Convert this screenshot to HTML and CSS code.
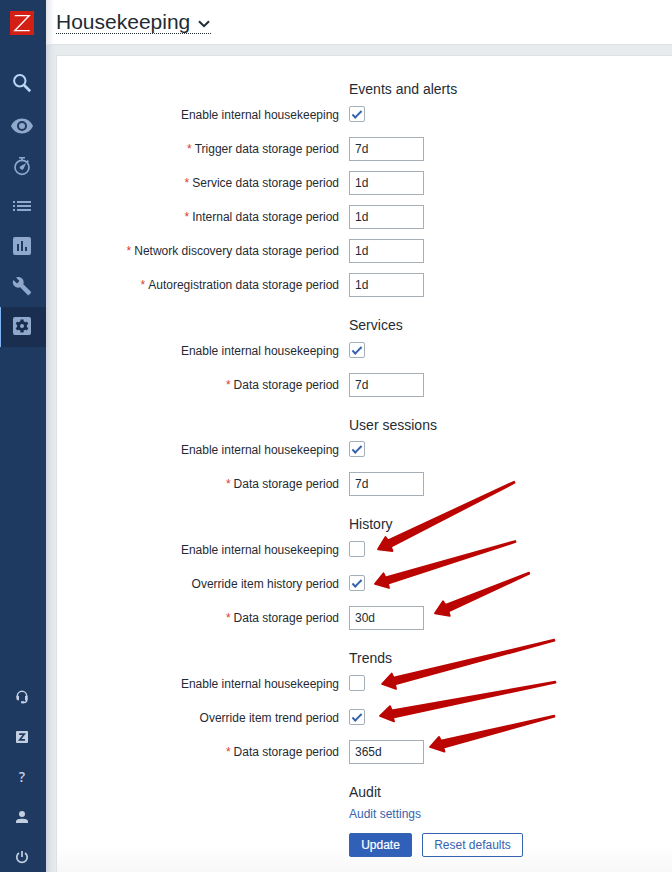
FILE: index.html
```html
<!DOCTYPE html>
<html lang="en">
<head>
<meta charset="utf-8">
<title>Housekeeping</title>
<link rel="stylesheet" href="styles.css">
</head>
<body>
<div class="app">
  <aside class="sidebar">
    <a class="logo"><svg width="24" height="24" viewBox="0 0 24 24"><path fill="#d31f14" d="M0 0h24v24H0z"/><path d="M4.700 4.500h14.600L4.700 19.700h15" fill="none" stroke="#fff" stroke-width="1.250"/></svg></a>
    <nav class="menu">
      <a class="search"><svg width="20" height="20" viewBox="0 0 20 20"><circle cx="7.800" cy="7.800" r="5.700" fill="none" stroke="currentColor" stroke-width="2"/><path d="M12 12l6.200 6.200" stroke="currentColor" stroke-width="2.700"/></svg></a>
      <a><svg width="22" height="16" viewBox="0 0 22 16"><path fill="currentColor" fill-rule="evenodd" d="M11 .5C6 .5 1.800 3.600 0 8c1.800 4.400 6 7.500 11 7.500S20.200 12.400 22 8C20.200 3.600 16 .5 11 .5zM11 13a5 5 0 1 1 0-10 5 5 0 0 1 0 10zm0-2a3 3 0 1 0 0-6 3 3 0 0 0 0 6z"/></svg></a>
      <a><svg width="18" height="20" viewBox="0 0 18 20"><circle cx="9" cy="11.300" r="7" fill="none" stroke="currentColor" stroke-width="1.700"/><path d="M6 1.700h6M9 2v2M14 4.500l1.500 1.500" stroke="currentColor" stroke-width="1.600"/><path fill="currentColor" d="M13 7.300l-2.300 5.200a2 2 0 1 1-2.900-2.600z"/></svg></a>
      <a><svg width="18" height="12" viewBox="0 0 18 12"><path fill="currentColor" d="M0 1h2v2H0zM4 1h14v2H4zM0 5h2v2H0zM4 5h14v2H4zM0 9h2v2H0zM4 9h14v2H4z"/></svg></a>
      <a><svg width="18" height="18" viewBox="0 0 18 18"><rect width="18" height="18" rx="2" fill="currentColor"/><path fill="#1f3a61" d="M4 7h2v7H4zM8 4h2v10H8zM12 10h2v4h-2z"/></svg></a>
      <a><svg width="20" height="20" viewBox="0 0 24 24"><path fill="currentColor" d="M22.700 19l-9.100-9.100c.9-2.300.4-5-1.500-6.900-2-2-5-2.400-7.400-1.300L9 6 6 9 1.600 4.700C.4 7.100.9 10.100 2.900 12.100c1.900 1.900 4.600 2.400 6.900 1.500l9.100 9.100c.4.4 1 .4 1.400 0l2.300-2.300c.5-.4.5-1.100.1-1.400z"/></svg></a>
      <a class="active"><svg width="18" height="18" viewBox="0 0 18 18"><rect width="18" height="18" rx="2" fill="currentColor"/><g fill="#1a2f50"><circle cx="9" cy="9" r="5"/><path d="M7.400 2.500h3.200v13H7.400zM2.600 7.050l1.500-2.600 11.300 6.500-1.500 2.600zM4.100 13.550l-1.500-2.600 11.300-6.500 1.500 2.600z"/></g><circle cx="9" cy="9" r="2" fill="currentColor"/></svg></a>
    </nav>
    <nav class="menu bottom">
      <a><svg width="14" height="14" viewBox="0 0 14 14"><path d="M2.300 8V6a4.700 4.700 0 0 1 9.400 0v4c0 1.700-1 2.400-2.500 2.400H7" fill="none" stroke="currentColor" stroke-width="1.500"/><path fill="currentColor" d="M1.500 6H4v4.300H3A1.500 1.500 0 0 1 1.500 9zM10 6h2.500v4.300H10zM6 11.300h3v2H6z"/></svg></a>
      <a><svg width="12" height="12" viewBox="0 0 12 12"><rect width="12" height="12" rx="1" fill="currentColor"/><path d="M3.200 3.200h5L3.700 8.900H9" fill="none" stroke="#1f3a61" stroke-width="1.700"/></svg></a>
      <a class="help">?</a>
      <a><svg width="12" height="12" viewBox="0 0 12 12"><circle cx="6" cy="3" r="3" fill="currentColor"/><path fill="currentColor" d="M0 12v-1.500C0 8.500 3 7.800 6 7.800s6 .7 6 2.700V12z"/></svg></a>
      <a><svg width="14" height="14" viewBox="0 0 14 14"><path d="M4 3a5.200 5.200 0 1 0 6 0M7 1v6" fill="none" stroke="currentColor" stroke-width="1.700"/></svg></a>
    </nav>
  </aside>
  <main class="main">
    <header class="header"><h1 class="title">Housekeeping<svg class="chevron" width="12" height="8" viewBox="0 0 12 8"><path d="M1 1.200l5 5 5-5" fill="none" stroke="#1f2c33" stroke-width="2"/></svg></h1></header>
    <form class="card">
      <section class="section">
        <h2>Events and alerts</h2>
        <div class="row"><label>Enable internal housekeeping</label><span class="check on"></span></div>
        <div class="row"><label class="req">Trigger data storage period</label><input value="7d"></div>
        <div class="row"><label class="req">Service data storage period</label><input value="1d"></div>
        <div class="row"><label class="req">Internal data storage period</label><input value="1d"></div>
        <div class="row"><label class="req">Network discovery data storage period</label><input value="1d"></div>
        <div class="row"><label class="req">Autoregistration data storage period</label><input value="1d"></div>
      </section>
      <section class="section">
        <h2>Services</h2>
        <div class="row"><label>Enable internal housekeeping</label><span class="check on"></span></div>
        <div class="row"><label class="req">Data storage period</label><input value="7d"></div>
      </section>
      <section class="section tight">
        <h2>User sessions</h2>
        <div class="row"><label>Enable internal housekeeping</label><span class="check on"></span></div>
        <div class="row"><label class="req">Data storage period</label><input value="7d"></div>
      </section>
      <section class="section">
        <h2>History</h2>
        <div class="row"><label>Enable internal housekeeping</label><span class="check"></span></div>
        <div class="row"><label>Override item history period</label><span class="check on"></span></div>
        <div class="row"><label class="req">Data storage period</label><input value="30d"></div>
      </section>
      <section class="section">
        <h2>Trends</h2>
        <div class="row"><label>Enable internal housekeeping</label><span class="check"></span></div>
        <div class="row"><label>Override item trend period</label><span class="check on"></span></div>
        <div class="row"><label class="req">Data storage period</label><input value="365d"></div>
      </section>
      <section class="section audit">
        <h2>Audit</h2>
        <a class="link">Audit settings</a>
        <div class="actions"><button type="button" class="btn primary">Update</button><button type="button" class="btn">Reset defaults</button></div>
      </section>
    </form>
  </main>
</div>
<svg class="arrows" width="672" height="872" viewBox="0 0 672 872">
  <path d="M378 549.300L385.500 537L388 540.300L514 481.700L514.500 482.800L391 546.800L392.500 551Z"/>
  <path d="M375 583.800L383.500 573.300L385.500 577.300L515.200 541L515.500 542L388 583.700L389 588Z"/>
  <path d="M435 613.300L443 601.300L445.500 604.800L529 572.700L529.300 573.700L448.500 611.500L449.700 615.800Z"/>
  <path d="M382 684L391.700 673.500L393.500 677.700L554.200 639.700L554.500 640.700L395 684.500L396 688.800Z"/>
  <path d="M380 715.800L390 706.200L391.800 710.400L555.200 681.700L555.500 682.700L393 717.500L394 721.300Z"/>
  <path d="M430 747L439 736.900L441 740.700L554.200 715.700L554.500 716.700L443.500 747.600L444.500 751.600Z"/>
</svg>
</body>
</html>
```
FILE: styles.css
```css
* { box-sizing: border-box; }
body {
  margin: 0;
  height: 872px;
  overflow: hidden;
  font: 12px/24px "Liberation Sans", Arial, sans-serif;
  color: #1f2c33;
}
.app { display: flex; height: 872px; }

.sidebar {
  display: flex;
  flex-direction: column;
  justify-content: space-between;
  width: 46px;
  flex: none;
  background: #1f3a61;
}
.logo { display: flex; justify-content: center; height: 62px; padding: 11px 2px 0 0; }
.menu { display: flex; flex-direction: column; color: #8fa8cb; }
.menu a {
  display: flex;
  align-items: center;
  justify-content: center;
  height: 40px;
  padding-right: 2px;
}
.menu .search { height: 44px; color: #bcd6f5; padding-bottom: 3px; }
.menu .active {
  margin-top: 1px;
  background: #1a2f50;
  border-left: 1px solid #7fb4f5;
  padding: 0 3px 2px 0;
}
.bottom { margin-top: auto; margin-bottom: -5px; color: #c3cfe0; }
.menu .help { font: 600 14px "Open Sans", sans-serif; padding-bottom: 1px; }

.main {
  flex: 1;
  min-width: 0;
  background: linear-gradient(to right, #ced3db, #e0e4e9 5px, #e8ebee 10px);
}
.header {
  height: 45px;
  padding: 9px 0 0 10px;
  background: linear-gradient(to right, #e2e5eb, #fff 8px);
  border-bottom: 1px solid #dce1e5;
}
.title {
  display: inline-flex;
  align-items: center;
  height: 25px;
  margin: 0;
  padding-right: 1px;
  font-size: 21px;
  line-height: 25px;
  font-weight: normal;
  border-bottom: 1px dotted #1f2c33;
}
.chevron { margin: 6px 0 0 8px; }

.card {
  height: 817px;
  margin: 10px 0 0 10px;
  padding: 21px 0 0;
  border: 1px solid #dce1e5;
  border-right: 0;
  border-bottom: 0;
  background: linear-gradient(#fff 790px, #f7f7f7 817px);
}
.section { display: flex; flex-direction: column; gap: 10px; margin-bottom: 16px; }
.section h2 {
  margin: 0 0 -8px 292px;
  font-size: 14px;
  line-height: 24px;
  font-weight: normal;
}
.tight h2 { margin-bottom: -9px; }
.row { display: flex; height: 24px; gap: 10px; }
.row label { width: 282px; text-align: right; }
.req::before { content: "*"; color: #d93c34; margin-right: 3px; }
.row input {
  width: 75px;
  height: 24px;
  padding: 0 5px;
  border: 1px solid #a4afb7;
  border-radius: 0;
  font: inherit;
  color: inherit;
  background: #fff;
}
.check {
  width: 16px;
  height: 16px;
  margin-top: 3px;
  border: 1px solid #a4afb7;
  border-radius: 2px;
  background: #fff;
}
.on::after {
  content: "";
  display: block;
  box-sizing: border-box;
  width: 10px;
  height: 5px;
  margin: 4px 0 0 2px;
  border: solid #3563af;
  border-width: 0 0 2px 2px;
  transform: rotate(-45deg);
}
.audit { gap: 0; padding-left: 292px; }
.audit h2 { margin: 0 0 -2px; }
.link { color: #3563b0; }
.actions { display: flex; gap: 10px; margin-top: 7px; }
.btn {
  height: 24px;
  width: 101px;
  padding: 0;
  font: inherit;
  line-height: 22px;
  color: #3563b0;
  background: #fff;
  border: 1px solid #3563b0;
  border-radius: 2px;
}
.primary { width: 63px; background: #3060b8; color: #fff; -webkit-text-stroke: .2px #fff; }

.arrows { position: absolute; top: 0; left: 0; pointer-events: none; }
.arrows path { fill: #bb0502; stroke: #bb0502; stroke-width: 1.800; stroke-linejoin: round; }
```
